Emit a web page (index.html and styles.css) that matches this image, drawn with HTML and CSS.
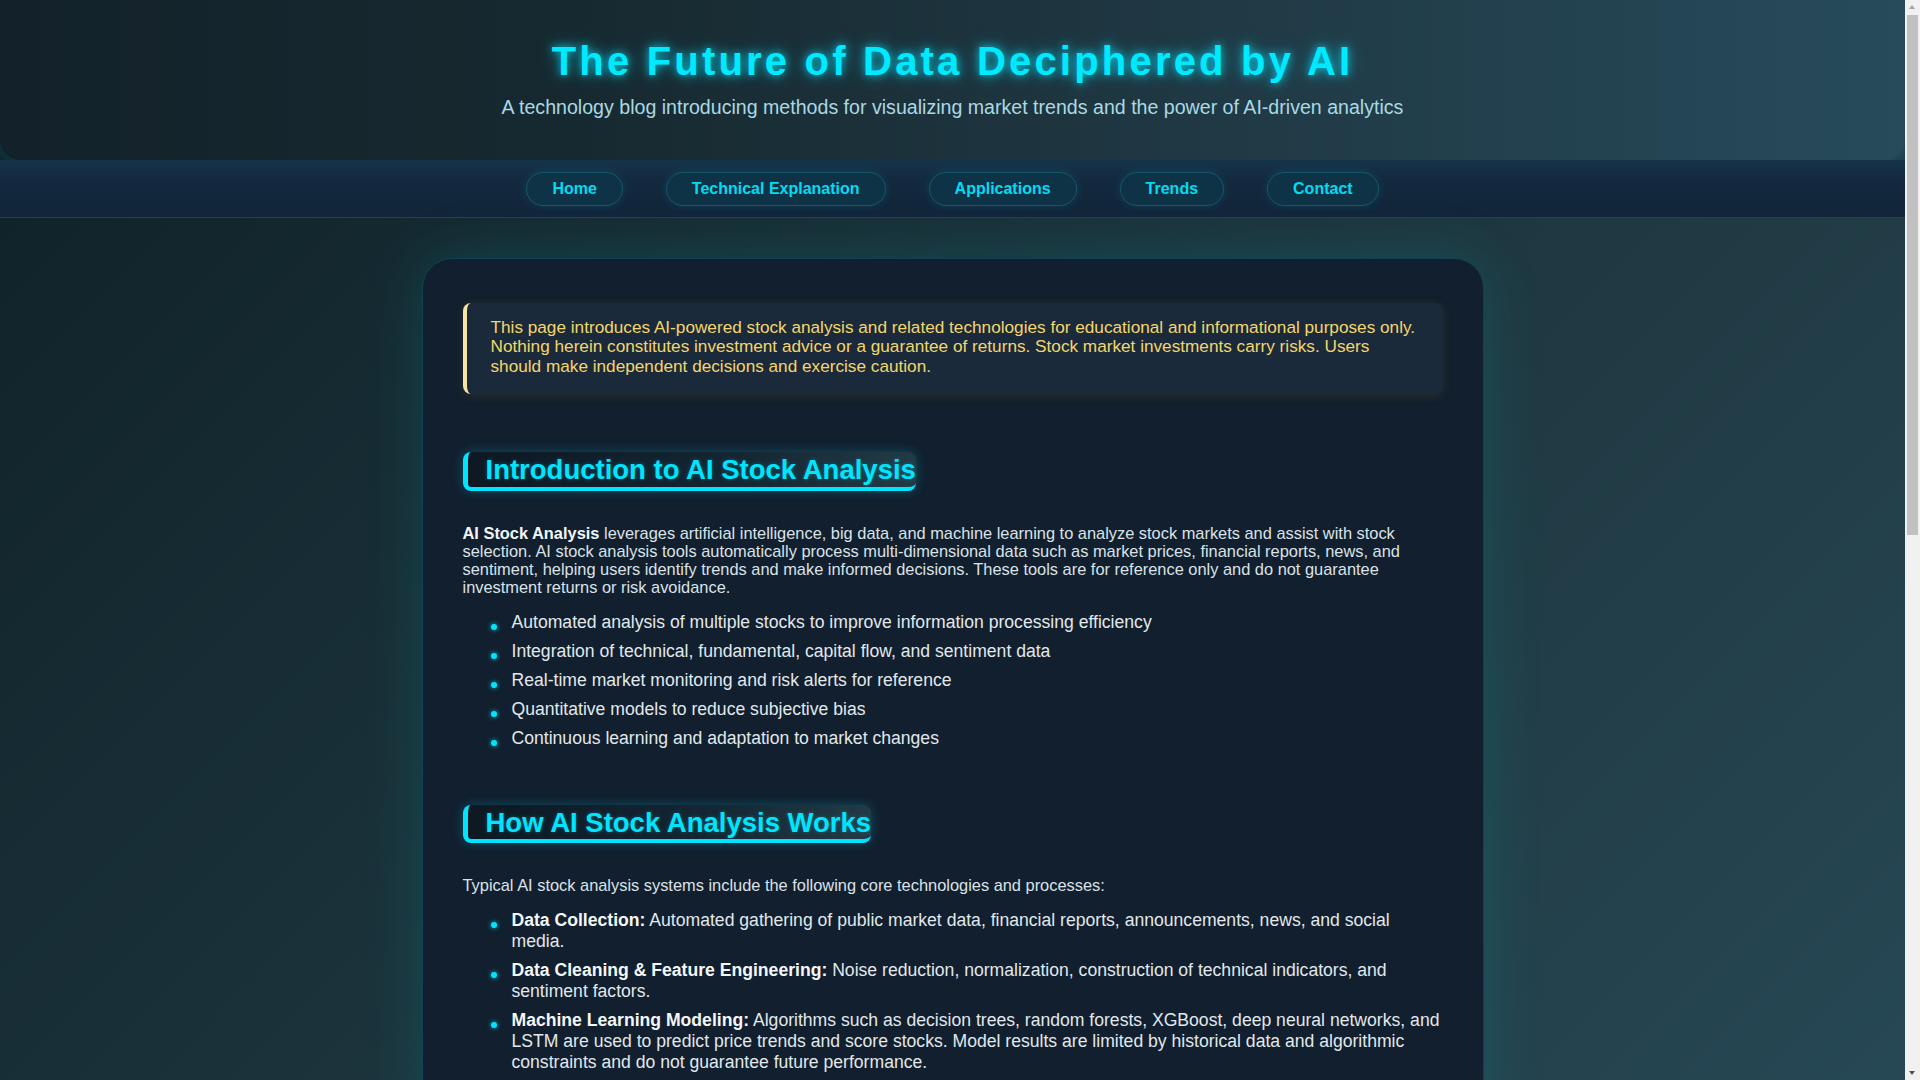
FILE: index.html
```html
<!DOCTYPE html>
<html lang="en">
<head>
<meta charset="utf-8">
<title>The Future of Data Deciphered by AI</title>
<link rel="stylesheet" href="styles.css">
</head>
<body>
<header class="site-header">
  <h1 class="site-title">The Future of Data Deciphered by AI</h1>
  <p class="site-subtitle">A technology blog introducing methods for visualizing market trends and the power of AI-driven analytics</p>
</header>
<nav class="site-nav">
  <a class="nav-link" href="#home">Home</a>
  <a class="nav-link" href="#tech">Technical Explanation</a>
  <a class="nav-link" href="#apps">Applications</a>
  <a class="nav-link" href="#trends">Trends</a>
  <a class="nav-link" href="#contact">Contact</a>
</nav>
<main class="card">
  <div class="disclaimer">This page introduces AI-powered stock analysis and related technologies for educational and informational purposes only. Nothing herein constitutes investment advice or a guarantee of returns. Stock market investments carry risks. Users should make independent decisions and exercise caution.</div>

  <section class="section" id="home">
    <h2 class="section-title">Introduction to AI Stock Analysis</h2>
    <p class="text"><strong>AI Stock Analysis</strong> leverages artificial intelligence, big data, and machine learning to analyze stock markets and assist with stock selection. AI stock analysis tools automatically process multi-dimensional data such as market prices, financial reports, news, and sentiment, helping users identify trends and make informed decisions. These tools are for reference only and do not guarantee investment returns or risk avoidance.</p>
    <ul class="list">
      <li>Automated analysis of multiple stocks to improve information processing efficiency</li>
      <li>Integration of technical, fundamental, capital flow, and sentiment data</li>
      <li>Real-time market monitoring and risk alerts for reference</li>
      <li>Quantitative models to reduce subjective bias</li>
      <li>Continuous learning and adaptation to market changes</li>
    </ul>
  </section>

  <section class="section" id="tech">
    <h2 class="section-title">How AI Stock Analysis Works</h2>
    <p class="text">Typical AI stock analysis systems include the following core technologies and processes:</p>
    <ul class="list">
      <li><strong>Data Collection:</strong> Automated gathering of public market data, financial reports, announcements, news, and social media.</li>
      <li><strong>Data Cleaning &amp; Feature Engineering:</strong> Noise reduction, normalization, construction of technical indicators, and sentiment factors.</li>
      <li><strong>Machine Learning Modeling:</strong> Algorithms such as decision trees, random forests, XGBoost, deep neural networks, and LSTM are used to predict price trends and score stocks. Model results are limited by historical data and algorithmic constraints and do not guarantee future performance.</li>
      <li><strong>Backtesting &amp; Evaluation:</strong> Strategies are tested on historical data to evaluate stability, drawdown, and risk characteristics.</li>
      <li><strong>Visualization &amp; Reporting:</strong> Results are presented through charts, heatmaps, and dashboards to support human judgment.</li>
    </ul>
  </section>

  <section class="section" id="apps">
    <h2 class="section-title">Applications of AI Stock Analysis</h2>
    <p class="text">AI-driven analytics are applied in a variety of scenarios for research and reference:</p>
    <ul class="list">
      <li>Stock screening based on multi-factor models</li>
      <li>Trend visualization and market sentiment tracking</li>
      <li>Portfolio risk monitoring and alerts</li>
      <li>Event-driven analysis of news and announcements</li>
    </ul>
  </section>

  <section class="section" id="trends">
    <h2 class="section-title">Future Trends</h2>
    <p class="text">As computing power and data availability grow, AI analysis tools are expected to become more transparent, explainable, and accessible. Users should always remain aware of model limitations and market risks.</p>
  </section>

  <section class="section" id="contact">
    <h2 class="section-title">Contact</h2>
    <p class="text">For questions or feedback about this blog, please reach out through the contact form.</p>
  </section>
</main>
<footer class="site-footer">&copy; The Future of Data Deciphered by AI</footer>
<div class="scrollbar" aria-hidden="true">
  <div class="scroll-arrow scroll-up"></div>
  <div class="scroll-track"><div class="scroll-thumb"></div></div>
  <div class="scroll-arrow scroll-down"></div>
</div>
</body>
</html>
```

FILE: styles.css
```css
* { box-sizing: border-box; }

html, body {
  margin: 0;
  padding: 0;
}

body {
  margin-right: 15px;
  font-family: "Liberation Sans", Arial, sans-serif;
  font-size: 16px;
  color: #dde4ea;
  background: linear-gradient(135deg, #0f2027 0%, #203a43 50%, #2c5364 100%);
  min-height: 100vh;
}

.site-header {
  height: 160px;
  padding: 39px 20px 0;
  text-align: center;
  background: linear-gradient(90deg, #13222a 0%, #172930 30%, #1f3742 60%, #274b5b 100%);
  border-radius: 0 0 20px 20px;
  box-shadow: 0 0 18px rgba(0, 229, 255, 0.22);
}

.site-title {
  margin: 0 0 12px;
  font-size: 40px;
  font-weight: bold;
  letter-spacing: 3.2px;
  color: #00eaff;
  text-shadow: 0 0 8px rgba(0, 229, 255, 0.8), 0 0 18px rgba(0, 229, 255, 0.45);
}

.site-subtitle {
  margin: 0;
  font-size: 19.6px;
  color: #a9d9e3;
}

.site-nav {
  display: flex;
  justify-content: center;
  gap: 43px;
  padding: 12px 0 11px;
  background: linear-gradient(180deg, #153449 0%, #13293e 35%, #12253a 100%);
  border-bottom: 1px solid #1b4557;
}

.nav-link {
  display: inline-block;
  padding: 7px 25px;
  font-size: 16px;
  font-weight: bold;
  color: #00dcf2;
  text-decoration: none;
  background: #0f3346;
  border: 1px solid #17566a;
  border-radius: 20px;
  box-shadow: 0 0 10px rgba(0, 229, 255, 0.12);
}

.card {
  width: 1062px;
  margin: 40px auto 60px;
  padding: 43.5px 40px 40px;
  background: #111f2e;
  border: 1px solid #0f4354;
  border-radius: 30px;
  box-shadow: 0 0 60px rgba(0, 210, 210, 0.16);
}

.disclaimer {
  padding: 15px 24px 18px 24px;
  margin-bottom: 58px;
  font-size: 17.2px;
  line-height: 19.5px;
  color: #f3d66b;
  background: #1b2a3b;
  border-left: 4px solid #f7e4a6;
  border-radius: 8px;
  box-shadow: 0 2px 12px rgba(230, 200, 80, 0.1);
}

.section {
  margin-bottom: 56px;
}

.section-title {
  display: inline-block;
  margin: 0 0 33px;
  padding: 2px 0 1px 18px;
  font-size: 27.5px;
  line-height: 31.6px;
  font-weight: bold;
  color: #00e5ff;
  background: linear-gradient(90deg, rgba(10, 20, 28, 0.6) 0%, rgba(20, 40, 52, 0.8) 60%, rgba(36, 62, 72, 0.9) 100%);
  border-left: 5px solid #00e5ff;
  border-bottom: 4px solid #00e5ff;
  border-radius: 8px;
  box-shadow: 0 0 12px rgba(0, 229, 255, 0.25);
  text-shadow: 0 0 4px rgba(0, 229, 255, 0.3);
}

.text {
  margin: 0 0 16px;
  font-size: 16.4px;
  line-height: 18px;
  color: #dbe2e8;
}

.text strong {
  color: #f2f6f8;
}

.list {
  margin: 0;
  padding: 0 0 0 49px;
  list-style: none;
}

.list li {
  position: relative;
  margin-bottom: 8.3px;
  font-size: 17.6px;
  line-height: 20.8px;
  color: #e2e8ec;
}

.list li:last-child {
  margin-bottom: 0;
}

.list li strong {
  color: #f4f7f9;
}

.list li::before {
  content: "";
  position: absolute;
  left: -21px;
  top: 12px;
  width: 6px;
  height: 6px;
  border-radius: 50%;
  background: #00e5ff;
  box-shadow: 0 0 5px rgba(0, 229, 255, 0.8);
}

.site-footer {
  padding: 20px;
  text-align: center;
  color: #8fb3bf;
  font-size: 14px;
}

.scrollbar {
  position: fixed;
  top: 0;
  right: 0;
  width: 15px;
  height: 100vh;
  display: flex;
  flex-direction: column;
  background: #f1f1f1;
}

.scroll-arrow {
  height: 15px;
  flex: 0 0 15px;
  position: relative;
}

.scroll-arrow::after {
  content: "";
  position: absolute;
  left: 4px;
  border-left: 3.5px solid transparent;
  border-right: 3.5px solid transparent;
}

.scroll-up::after {
  top: 5px;
  border-bottom: 4px solid #a3a3a3;
}

.scroll-down::after {
  top: 6px;
  border-top: 4px solid #505050;
}

.scroll-track {
  flex: 1;
  padding: 0 2px;
}

.scroll-thumb {
  height: 520px;
  background: #c1c1c1;
}
```
